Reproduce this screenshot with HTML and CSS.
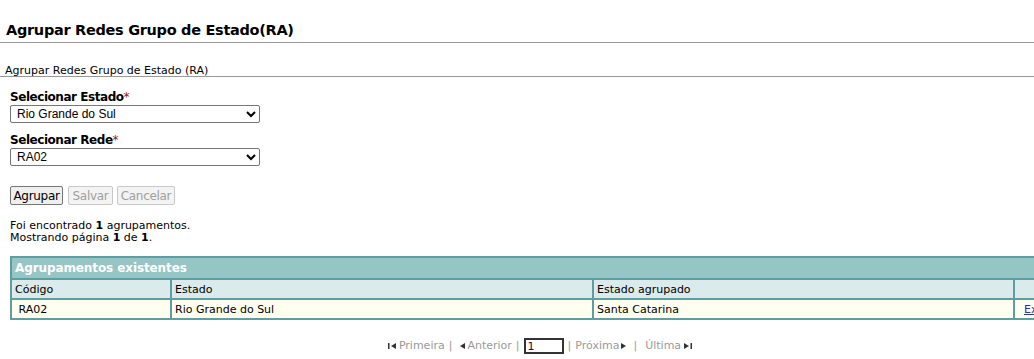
FILE: index.html
```html
<!DOCTYPE html>
<html lang="pt-BR">
<head>
    <meta charset="UTF-8">
    <title>Agrupar Redes Grupo de Estado(RA)</title>
    <link rel="stylesheet" href="styles.css">
</head>
<body>

    <div class="page-title">
        <h1>Agrupar Redes Grupo de Estado(RA)</h1>
    </div>

    <div class="breadcrumb">Agrupar Redes Grupo de Estado (RA)</div>

    <form class="filter-form">
        <div class="field">
            <label for="estado">Selecionar Estado<span class="req">*</span></label>
            <select id="estado">
                <option>Rio Grande do Sul</option>
            </select>
        </div>
        <div class="field">
            <label for="rede">Selecionar Rede<span class="req">*</span></label>
            <select id="rede">
                <option>RA02</option>
            </select>
        </div>

        <div class="actions">
            <button type="button" class="btn-agrupar">Agrupar</button>
            <button type="button" class="btn-salvar" disabled>Salvar</button>
            <button type="button" class="btn-cancelar" disabled>Cancelar</button>
        </div>
    </form>

    <div class="summary">
        <p>Foi encontrado <b>1</b> agrupamentos.</p>
        <p>Mostrando página <b>1</b> de <b>1</b>.</p>
    </div>

    <div class="grid-wrap">
        <table class="grid">
            <colgroup>
                <col class="col-code">
                <col class="col-state">
                <col class="col-group">
                <col class="col-action">
            </colgroup>
            <thead>
                <tr>
                    <th colspan="4" class="grid-caption">Agrupamentos existentes</th>
                </tr>
                <tr class="grid-head">
                    <th>Código</th>
                    <th>Estado</th>
                    <th>Estado agrupado</th>
                    <th></th>
                </tr>
            </thead>
            <tbody>
                <tr>
                    <td>&nbsp;RA02</td>
                    <td>Rio Grande do Sul</td>
                    <td>Santa Catarina</td>
                    <td><a href="#">Excluir</a></td>
                </tr>
            </tbody>
        </table>

        <div class="pager">
            <svg class="ico ico-first" width="8" height="8" viewBox="0 0 8 8"><rect x="0" y="1" width="1.5" height="6"/><path d="M8 1 L3 4 L8 7 Z"/></svg>
            <span class="pg-link">Primeira</span>
            <span class="sep">|</span>
            <svg class="ico ico-prev" width="5" height="8" viewBox="0 0 5 8"><path d="M5 1 L0 4 L5 7 Z"/></svg>
            <span class="pg-link">Anterior</span>
            <span class="sep">|</span>
            <input type="text" value="1" class="page-input">
            <span class="sep">|</span>
            <span class="pg-link">Próxima</span>
            <svg class="ico ico-next" width="5" height="8" viewBox="0 0 5 8"><path d="M0 1 L5 4 L0 7 Z"/></svg>
            <span class="sep sep-wide">|</span>
            <span class="pg-link">Última</span>
            <svg class="ico ico-last" width="8" height="8" viewBox="0 0 8 8"><path d="M0 1 L5 4 L0 7 Z"/><rect x="6.5" y="1" width="1.5" height="6"/></svg>
        </div>
    </div>

</body>
</html>
```

FILE: styles.css
```css
html, body {
    overflow-x: hidden;
}

body {
    margin: 0;
    font-family: 'DejaVu Sans', Verdana, sans-serif;
    font-size: 11px;
    color: #000;
    background-color: #fff;
}

.page-title {
    padding: 22px 6px 0;
    height: 20px;
    border-bottom: 1px solid #999;
}

.page-title h1 {
    margin: 0;
    font-size: 14.5px;
    line-height: 17px;
    font-weight: bold;
    letter-spacing: -0.3px;
}

.breadcrumb {
    margin-top: 22px;
    padding: 0 5px;
    height: 11px;
    line-height: 11px;
    border-bottom: 1px solid #999;
}

.filter-form {
    padding: 12px 10px 0;
}

.field + .field {
    margin-top: 9px;
}

.field label {
    display: block;
    font-size: 12px;
    font-weight: bold;
    line-height: 16px;
    letter-spacing: -0.45px;
}

.req {
    color: #8b1a1a;
    font-weight: normal;
}

select {
    display: block;
    width: 250px;
    height: 18px;
    margin: 0;
    padding: 0 2px;
    font-family: 'Liberation Sans', Arial, sans-serif;
    font-size: 12px;
    border: 1px solid #767676;
    border-radius: 2px;
    background-color: #fff;
}

.actions {
    display: flex;
    gap: 4px;
    margin-top: 20px;
}

.actions button {
    height: 19px;
    padding: 0;
    font-family: 'DejaVu Sans', Verdana, sans-serif;
    font-size: 12px;
    letter-spacing: -0.3px;
    color: #000;
    background-color: #efefef;
    border: 1px solid #767676;
    border-radius: 2px;
}

.btn-agrupar { width: 53px; }
.btn-salvar { width: 45px; margin-left: 1px; }
.btn-cancelar { width: 58px; }

.actions button:disabled {
    color: #a0a0a0;
    border-color: #c8c8c8;
    background-color: #f3f3f3;
}

.summary {
    padding: 15px 10px 0;
}

.summary p {
    margin: 0;
    line-height: 12px;
}

.grid-wrap {
    margin: 12px 0 0 10px;
    width: 1060px;
}

.grid {
    width: 100%;
    border-collapse: collapse;
    table-layout: fixed;
}

.col-code { width: 160px; }
.col-state { width: 422px; }
.col-group { width: 421px; }

.grid th, .grid td {
    border: 2px solid #5f9ea0;
    text-align: left;
    padding: 0 3px;
    font-weight: normal;
    height: 18px;
    white-space: nowrap;
    overflow: hidden;
}

.grid th.grid-caption {
    background-color: #96c5c5;
    color: #fff;
    font-size: 12px;
    font-weight: bold;
    letter-spacing: -0.1px;
    height: 20px;
}

.grid-head th {
    background-color: #dbeaea;
}

.grid tbody td {
    background-color: #fffff0;
}

.grid a {
    color: #2a2acb;
    text-decoration: underline;
    padding-left: 6px;
}

.pager {
    display: flex;
    justify-content: center;
    align-items: center;
    margin-top: 18px;
    color: #9a9a9a;
    font-size: 11px;
    line-height: 16px;
}

.ico {
    fill: #333;
}

.ico-first { margin-right: 3px; }
.ico-prev { margin-right: 2px; }
.ico-next { margin-left: 2px; }
.ico-last { margin-left: 3px; }

.sep {
    margin: 0 4px 0 4px;
}

.sep + .ico-prev {
    margin-left: 4px;
}

.sep-wide {
    margin: 0 8px 0 7px;
}

.page-input {
    width: 40px;
    height: 16px;
    box-sizing: border-box;
    padding: 0 2px;
    border: 2px solid #333;
    font-size: 11px;
    font-family: 'DejaVu Sans', Verdana, sans-serif;
    color: #400020;
}
```
